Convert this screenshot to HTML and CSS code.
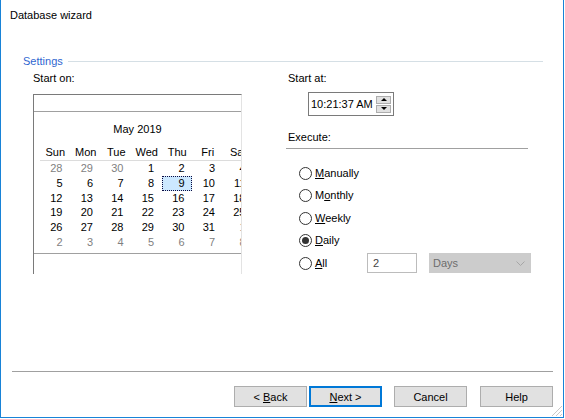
FILE: index.html
```html
<!DOCTYPE html>
<html lang="en">
  <head>
    <meta charset="UTF-8" />
    <title>Database wizard</title>
    <link rel="stylesheet" href="styles.css">
  </head>
  <body>
    <div class="window">
      <div class="title">Database wizard</div>

      <div class="group">
        <div class="group-head">
          <span class="group-name">Settings</span>
          <span class="group-rule"></span>
        </div>

        <div class="group-body">
          <!-- Start date -->
          <div class="col-left">
            <div class="label">Start on:</div>
            <div class="calendar">
              <div class="cal-top"></div>
              <div class="cal-month">May 2019</div>
              <div class="cal-head">
                <span>Sun</span><span>Mon</span><span>Tue</span><span>Wed</span><span>Thu</span><span>Fri</span><span>Sat</span>
              </div>
              <div class="cal-days">
                <span class="week-rule"></span>
                <div class="cal-grid">
                  <span class="other">28</span><span class="other">29</span><span class="other">30</span><span>1</span><span>2</span><span>3</span><span>4</span>
                  <span>5</span><span>6</span><span>7</span><span>8</span><span class="selected">9</span><span>10</span><span>11</span>
                  <span>12</span><span>13</span><span>14</span><span>15</span><span>16</span><span>17</span><span>18</span>
                  <span>19</span><span>20</span><span>21</span><span>22</span><span>23</span><span>24</span><span>25</span>
                  <span>26</span><span>27</span><span>28</span><span>29</span><span>30</span><span>31</span><span class="other">1</span>
                  <span class="other">2</span><span class="other">3</span><span class="other">4</span><span class="other">5</span><span class="other">6</span><span class="other">7</span><span class="other">8</span>
                </div>
              </div>
              <div class="cal-bottom"></div>
            </div>
          </div>

          <!-- Start time and schedule -->
          <div class="col-right">
            <div class="label">Start at:</div>
            <div class="time-box">
              <span class="time-text">10:21:37 AM</span>
              <span class="spin">
                <span class="spin-btn"><span class="arrow-up"></span></span>
                <span class="spin-btn"><span class="arrow-down"></span></span>
              </span>
            </div>

            <div class="label execute">Execute:</div>
            <div class="execute-rule"></div>

            <div class="radio-list">
              <div class="radio-row">
                <span class="radio"></span>
                <span class="radio-label"><u>M</u>anually</span>
              </div>
              <div class="radio-row">
                <span class="radio"></span>
                <span class="radio-label">M<u>o</u>nthly</span>
              </div>
              <div class="radio-row">
                <span class="radio"></span>
                <span class="radio-label"><u>W</u>eekly</span>
              </div>
              <div class="radio-row">
                <span class="radio checked"></span>
                <span class="radio-label"><u>D</u>aily</span>
              </div>
              <div class="radio-row">
                <span class="radio"></span>
                <span class="radio-label all"><u>A</u>ll</span>
                <span class="num-box">2</span>
                <span class="combo">
                  <span>Days</span>
                  <svg class="chevron" width="9" height="5" viewBox="0 0 9 5">
                    <polyline points="0.5,0.5 4.5,4.5 8.5,0.5" fill="none" stroke="#a6a6a6" stroke-width="1" />
                  </svg>
                </span>
              </div>
            </div>
          </div>
        </div>
      </div>

      <div class="footer">
        <div class="footer-rule"></div>
        <div class="buttons">
          <button class="btn">&lt; <u>B</u>ack</button>
          <button class="btn default"><u>N</u>ext &gt;</button>
          <button class="btn gap">Cancel</button>
          <button class="btn gap-wide">Help</button>
        </div>
      </div>

      <svg class="grip" width="12" height="12" viewBox="0 0 12 12">
        <line x1="11" y1="1" x2="1" y2="11" stroke="#c8c8c8" />
        <line x1="11" y1="5" x2="5" y2="11" stroke="#c8c8c8" />
        <line x1="11" y1="9" x2="9" y2="11" stroke="#c8c8c8" />
      </svg>
    </div>
  </body>
</html>
```

FILE: styles.css
```css
:root {
  --accent: #1883d7;
  --focus: #0078d7;
  --text-color: #000;
  --muted: #7f7f7f;
  --line: #a0a0a0;
  --frame: #7a7a7a;
  --btn-face: #e1e1e1;
  --btn-border: #adadad;
  --font-family: "Liberation Sans", Arial, sans-serif;
}

* {
  margin: 0;
  padding: 0;
  box-sizing: border-box;
}

body {
  font-family: var(--font-family);
  font-size: 11px;
  line-height: 15px;
  color: var(--text-color);
  background-color: #fff;
}

.window {
  position: relative;
  width: 564px;
  height: 418px;
  border: 1px solid var(--accent);
  border-top: none;
  display: flex;
  flex-direction: column;
  background-color: #fff;
}

.title {
  margin: 8px 0 0 9px;
}

/* Group box */
.group-head {
  display: flex;
  align-items: center;
  height: 15px;
  margin: 31px 20px 0 22px;
}

.group-name {
  color: #2f66d0;
}

.group-rule {
  flex: 1;
  height: 1px;
  margin-left: 5px;
  background-color: #d5dfe5;
}

.group-body {
  display: flex;
  padding: 2px 0 0 32px;
}

.col-left {
  width: 209px;
}

.col-right {
  margin-left: 46px;
}

/* Month calendar */
.calendar {
  width: 209px;
  height: 180px;
  margin-top: 8px;
  border-top: 1px solid var(--frame);
  border-left: 1px solid var(--frame);
  border-right: 1px solid #e3e3e3;
  overflow: hidden;
}

.cal-top {
  height: 17px;
  border-bottom: 1px solid var(--line);
}

.cal-month {
  margin-top: 10px;
  text-align: center;
}

.cal-head {
  display: grid;
  grid-template-columns: repeat(7, 30.5px);
  width: 220px;
  margin: 8px 0 0 6px;
  border-bottom: 1px solid #dcdcdc;
  text-align: center;
}

.cal-days {
  display: flex;
  padding-left: 3px;
}

.week-rule {
  width: 1px;
  height: 82px;
  margin-top: 3px;
  background-color: #000;
}

.cal-grid {
  display: grid;
  grid-template-columns: repeat(7, 30.5px);
  grid-auto-rows: 14.8px;
  margin-left: 2px;
  text-align: right;
}

.cal-grid span {
  padding-right: 7px;
  line-height: 14.8px;
}

.cal-grid .other {
  color: var(--muted);
}

.cal-grid .selected {
  margin-left: 1px;
  padding-right: 6px;
  background-color: #cce8ff;
  border: 1px dotted #0a0a40;
  line-height: 12.8px;
}

.cal-bottom {
  margin-top: 3px;
  border-top: 1px solid var(--line);
}

/* Time picker */
.time-box {
  display: flex;
  align-items: center;
  width: 86px;
  height: 24px;
  margin: 6px 0 0 20px;
  padding-left: 2px;
  border: 1px solid var(--frame);
}

.spin {
  display: flex;
  flex-direction: column;
  gap: 1px;
  margin: 0 2px 0 auto;
}

.spin-btn {
  display: flex;
  align-items: center;
  justify-content: center;
  width: 15px;
  height: 8px;
  background-color: var(--btn-face);
  border: 1px solid var(--btn-border);
}

.arrow-up {
  border-left: 3px solid transparent;
  border-right: 3px solid transparent;
  border-bottom: 3px solid #000;
}

.arrow-down {
  border-left: 3px solid transparent;
  border-right: 3px solid transparent;
  border-top: 3px solid #000;
}

.execute {
  margin-top: 14px;
}

.execute-rule {
  width: 242px;
  height: 1px;
  margin: 3px 0 0 -2px;
  background-color: var(--line);
}

/* Radio buttons */
.radio-list {
  margin-top: 13px;
}

.radio-row {
  display: flex;
  align-items: center;
  height: 22.5px;
}

.radio {
  display: flex;
  align-items: center;
  justify-content: center;
  width: 13px;
  height: 13px;
  margin-left: 11px;
  border: 1px solid #333;
  border-radius: 50%;
  background-color: #fff;
}

.radio.checked::after {
  content: "";
  width: 7px;
  height: 7px;
  border-radius: 50%;
  background-color: #333;
}

.radio-label {
  margin-left: 3px;
}

.radio-label.all {
  width: 52px;
}

.num-box {
  width: 50px;
  height: 20px;
  padding-left: 5px;
  border: 1px solid #bcbcbc;
  color: #444;
  line-height: 18px;
}

.combo {
  display: flex;
  align-items: center;
  justify-content: space-between;
  width: 102px;
  height: 20px;
  margin-left: 12px;
  padding: 0 5px 0 3px;
  background-color: #ccc;
  border: 1px solid #ccc;
  color: #6d6d6d;
}

/* Wizard buttons */
.footer {
  margin-top: auto;
}

.footer-rule {
  height: 1px;
  margin: 0 10px 0 11px;
  background-color: var(--line);
}

.buttons {
  display: flex;
  justify-content: flex-end;
  gap: 2px;
  margin-top: 14px;
  padding: 0 10px 10px 0;
}

.btn {
  width: 73px;
  height: 21px;
  background-color: var(--btn-face);
  border: 1px solid var(--btn-border);
  font-family: var(--font-family);
  font-size: 11px;
  color: var(--text-color);
}

.btn.default {
  border: 2px solid var(--focus);
}

.btn.gap {
  margin-left: 10px;
}

.btn.gap-wide {
  margin-left: 11px;
}

.grip {
  position: absolute;
  right: 0;
  bottom: 0;
}
```
